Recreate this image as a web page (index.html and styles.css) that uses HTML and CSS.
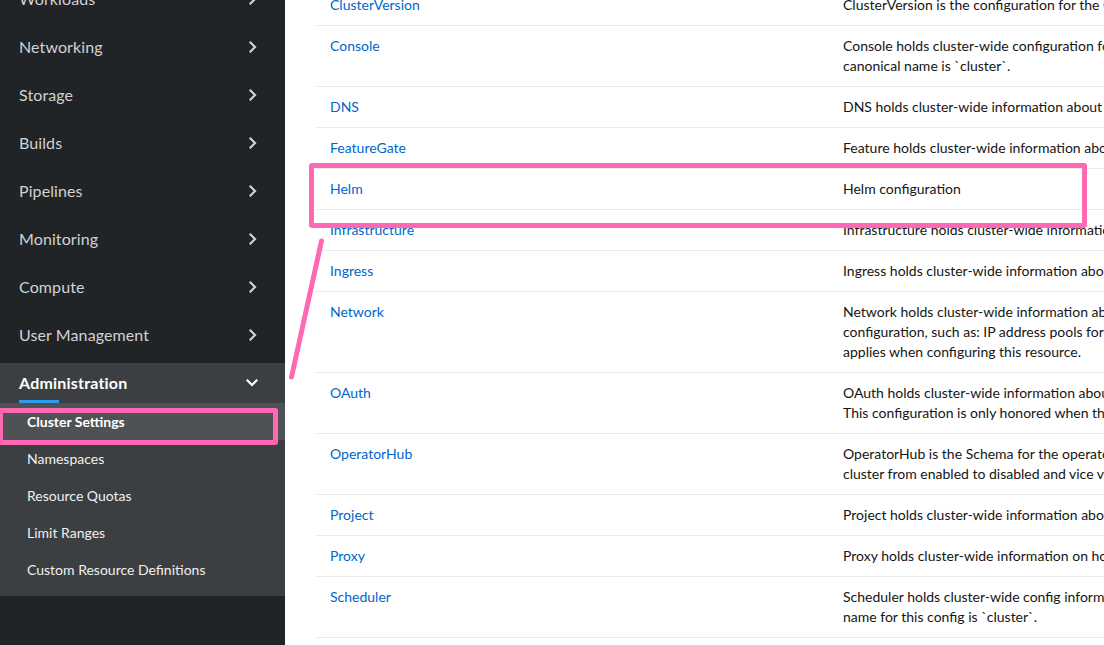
FILE: index.html
```html
<!DOCTYPE html>
<html lang="en">
<head>
<meta charset="utf-8">
<title>Cluster Settings</title>
<link rel="stylesheet" href="styles.css">
</head>
<body>
<div class="app">
  <nav class="sidebar">
    <ul class="nav">
      <li class="nav-item"><span class="label">Workloads</span><svg class="chev" width="8" height="12" viewBox="0 0 8 12"><polyline points="1.5,1.5 6,6 1.5,10.5"/></svg></li>
      <li class="nav-item"><span class="label">Networking</span><svg class="chev" width="8" height="12" viewBox="0 0 8 12"><polyline points="1.5,1.5 6,6 1.5,10.5"/></svg></li>
      <li class="nav-item"><span class="label">Storage</span><svg class="chev" width="8" height="12" viewBox="0 0 8 12"><polyline points="1.5,1.5 6,6 1.5,10.5"/></svg></li>
      <li class="nav-item"><span class="label">Builds</span><svg class="chev" width="8" height="12" viewBox="0 0 8 12"><polyline points="1.5,1.5 6,6 1.5,10.5"/></svg></li>
      <li class="nav-item"><span class="label">Pipelines</span><svg class="chev" width="8" height="12" viewBox="0 0 8 12"><polyline points="1.5,1.5 6,6 1.5,10.5"/></svg></li>
      <li class="nav-item"><span class="label">Monitoring</span><svg class="chev" width="8" height="12" viewBox="0 0 8 12"><polyline points="1.5,1.5 6,6 1.5,10.5"/></svg></li>
      <li class="nav-item"><span class="label">Compute</span><svg class="chev" width="8" height="12" viewBox="0 0 8 12"><polyline points="1.5,1.5 6,6 1.5,10.5"/></svg></li>
      <li class="nav-item"><span class="label">User Management</span><svg class="chev" width="8" height="12" viewBox="0 0 8 12"><polyline points="1.5,1.5 6,6 1.5,10.5"/></svg></li>
      <li class="nav-group">
        <div class="nav-item group-head"><span class="label">Administration</span><svg class="chev down" width="12" height="8" viewBox="0 0 12 8"><polyline points="1.5,1.5 6,6 10.5,1.5"/></svg></div>
        <ul class="subnav">
          <li class="sub-item current">Cluster Settings</li>
          <li class="sub-item">Namespaces</li>
          <li class="sub-item">Resource Quotas</li>
          <li class="sub-item">Limit Ranges</li>
          <li class="sub-item">Custom Resource Definitions</li>
        </ul>
      </li>
    </ul>
  </nav>
  <main class="content">
    <table class="resources">
      <colgroup><col class="c-name"><col class="c-desc"></colgroup>
      <tbody>
        <tr><td><a>ClusterVersion</a></td><td><div class="ln">ClusterVersion is the configuration for the ClusterVersionOperator. This is where parameters related to automatic updates can be set.</div></td></tr>
        <tr><td><a>Console</a></td><td><div class="ln">Console holds cluster-wide configuration for the web console, including the logout URL, and reports the public URL of the console. The</div><div class="ln">canonical name is `cluster`.</div></td></tr>
        <tr><td><a>DNS</a></td><td><div class="ln">DNS holds cluster-wide information about DNS. The canonical name is `cluster`</div></td></tr>
        <tr><td><a>FeatureGate</a></td><td><div class="ln">Feature holds cluster-wide information about feature gates. The canonical name is `cluster`</div></td></tr>
        <tr><td><a>Helm</a></td><td><div class="ln">Helm configuration</div></td></tr>
        <tr><td><a>Infrastructure</a></td><td><div class="ln">Infrastructure holds cluster-wide information about Infrastructure. The canonical name is `cluster`</div></td></tr>
        <tr><td><a>Ingress</a></td><td><div class="ln">Ingress holds cluster-wide information about ingress, including the default ingress domain used for routes. The canonical name is `cluster`.</div></td></tr>
        <tr><td><a>Network</a></td><td><div class="ln">Network holds cluster-wide information about Network. The canonical name is `cluster`. It is used to configure the desired network</div><div class="ln">configuration, such as: IP address pools for services/pod IPs, network plugin, etc. Please view network.spec for an explanation on what</div><div class="ln">applies when configuring this resource.</div></td></tr>
        <tr><td><a>OAuth</a></td><td><div class="ln">OAuth holds cluster-wide information about OAuth. The canonical name is `cluster`. It is used to configure the integrated OAuth server.</div><div class="ln">This configuration is only honored when the top level Authentication config has type set to IntegratedOAuth.</div></td></tr>
        <tr><td><a>OperatorHub</a></td><td><div class="ln">OperatorHub is the Schema for the operatorhubs API. It can be used to change the state of the default hub sources for OperatorHub on the</div><div class="ln">cluster from enabled to disabled and vice versa.</div></td></tr>
        <tr><td><a>Project</a></td><td><div class="ln">Project holds cluster-wide information about Project. The canonical name is `cluster`</div></td></tr>
        <tr><td><a>Proxy</a></td><td><div class="ln">Proxy holds cluster-wide information on how to configure default proxies for the cluster. The canonical name is `cluster`</div></td></tr>
        <tr><td><a>Scheduler</a></td><td><div class="ln">Scheduler holds cluster-wide config information to run the Kubernetes Scheduler and influence its placement decisions. The canonical</div><div class="ln">name for this config is `cluster`.</div></td></tr>
      </tbody>
    </table>
  </main>
  <div class="mark mark-row"></div>
  <div class="mark mark-nav"></div>
  <svg class="mark-line" width="60" height="160" viewBox="0 0 60 160"><line x1="41.5" y1="11" x2="11.5" y2="147"/></svg>
</div>
</body>
</html>
```

FILE: styles.css
```css
* { box-sizing: border-box; }
html, body { margin: 0; padding: 0; height: 100%; overflow: hidden; }
body {
  font-family: "Lato", "Noto Sans", "Liberation Sans", sans-serif;
  background: #ffffff;
}
.app {
  position: relative;
  display: flex;
  width: 1104px;
  height: 645px;
  overflow: hidden;
}
.sidebar {
  flex: 0 0 285px;
  width: 285px;
  background: #212427;
  overflow: hidden;
}
.nav, .subnav {
  list-style: none;
  margin: 0;
  padding: 0;
}
.nav {
  margin-top: -21px;
  display: flex;
  flex-direction: column;
  gap: 8px;
}
.nav-item {
  height: 40px;
  display: flex;
  align-items: center;
  justify-content: space-between;
  padding: 0 28px 0 19px;
  color: #d2d2d2;
  font-size: 16px;
  letter-spacing: 0.1px;
}
.nav-item .label {
  margin-bottom: 2px;
}
.chev polyline {
  fill: none;
  stroke: #d2d2d2;
  stroke-width: 2.2;
  stroke-linecap: square;
}
.nav-group {
  background: #3c3f42;
  padding-bottom: 8px;
}
.group-head {
  position: relative;
  color: #ffffff;
  font-weight: 700;
  padding-right: 27px;
  letter-spacing: 0.2px;
}
.group-head::after {
  content: "";
  position: absolute;
  left: 19px;
  bottom: 0;
  width: 40px;
  height: 3px;
  background: #2b9af3;
}
.chev.down polyline { stroke: #ffffff; }
.sub-item {
  height: 37px;
  display: flex;
  align-items: center;
  padding-left: 27px;
  font-size: 14px;
  color: #f0f0f0;
}
.sub-item.current {
  background: #4f5255;
  color: #ffffff;
  font-weight: 700;
}
.content {
  flex: 1 1 auto;
  min-width: 0;
  overflow: hidden;
  padding-left: 30px;
}
.resources {
  margin-top: -15px;
  width: 1313px;
  border-collapse: collapse;
  table-layout: fixed;
  font-size: 14px;
  line-height: 20px;
}
.c-name { width: 513px; }
.c-desc { width: 800px; }
.resources td {
  padding: 10px 15px;
  vertical-align: top;
  border-bottom: 1px solid #ebebeb;
  color: #151515;
}
.resources a {
  color: #0066cc;
  text-decoration: none;
}
.ln { white-space: nowrap; }
.mark {
  position: absolute;
  border: 5px solid #ff69b4;
  border-radius: 3px;
}
.mark-row {
  left: 309px;
  top: 163px;
  width: 778px;
  height: 65px;
}
.mark-nav {
  left: -2px;
  top: 408px;
  width: 280px;
  height: 37px;
}
.mark-line {
  position: absolute;
  left: 280px;
  top: 230px;
}
.mark-line line {
  stroke: #ff69b4;
  stroke-width: 5;
  stroke-linecap: round;
}
```
